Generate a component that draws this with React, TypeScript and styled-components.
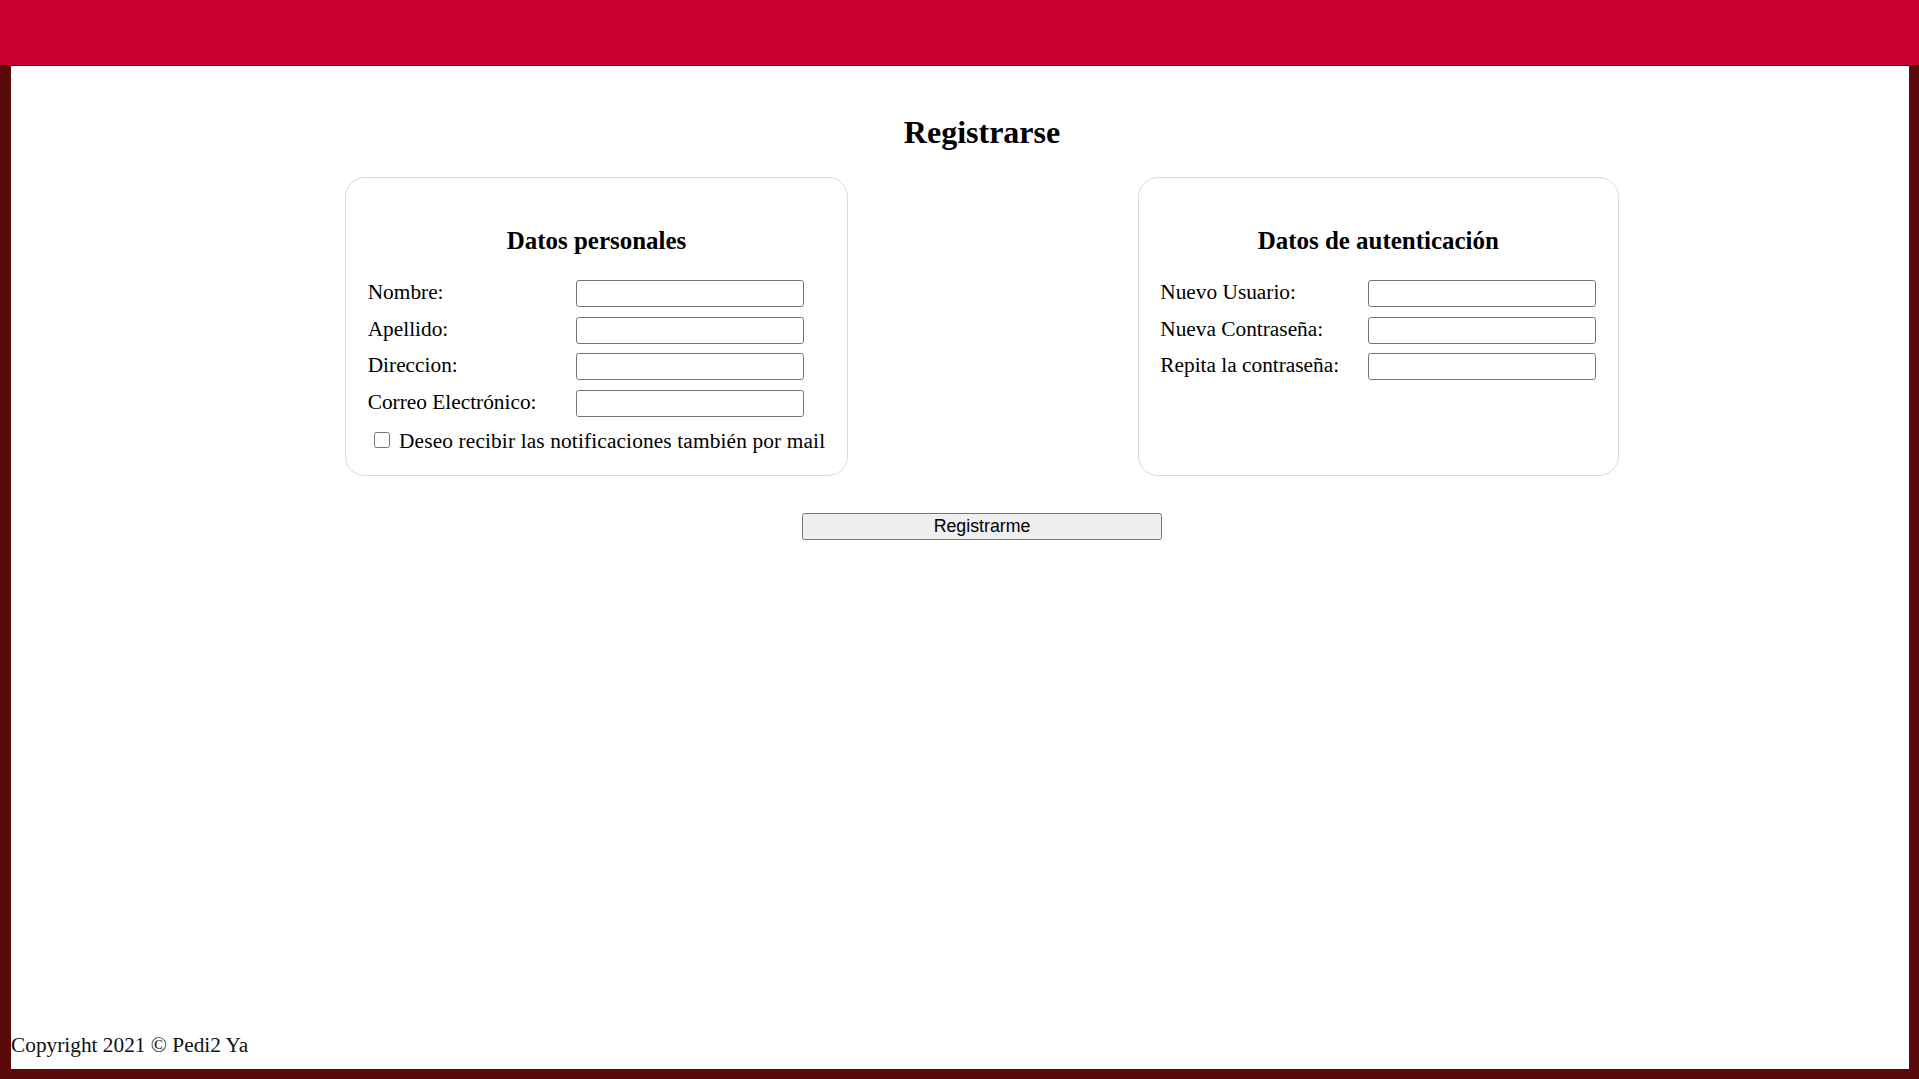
import React from 'react'
import styled, { createGlobalStyle } from 'styled-components'

const GlobalStyle = createGlobalStyle`
  html, body {
    margin: 0;
    padding: 0;
  }

  body {
    background-color: #5b0a0c;
    font-family: "Liberation Serif", "Times New Roman", serif;
    font-size: 21.33px;
    color: #000;
  }
`

const Page = styled.div`
  display: flex;
  flex-direction: column;
  min-height: 100vh;
`

const Header = styled.header`
  height: 65px;
  background-color: #cc0030;
  border-bottom: 1px solid #000;
  flex-shrink: 0;
`

const Frame = styled.div`
  flex: 1;
  display: flex;
  padding: 0 10px 10px 11px;
`

const Sheet = styled.div`
  flex: 1;
  display: flex;
  flex-direction: column;
  background-color: #fff;
  padding-top: 21px;
  padding-bottom: 11px;
`

const Main = styled.main`
  padding-left: 44px;
`

const Title = styled.h2`
  margin: 26.5px 0;
  font-size: 32px;
  font-weight: bold;
  text-align: center;
`

const Cards = styled.div`
  display: flex;
  justify-content: space-evenly;
  align-items: stretch;
`

const Card = styled.section`
  border: 1.33px solid #dadada;
  border-radius: 20px;
  padding: 21.33px;
`

const CardTitle = styled.h3`
  margin: 27.5px 0 25px;
  font-size: 24.96px;
  font-weight: bold;
  text-align: center;
`

const Fields = styled.div`
  display: grid;
  grid-template-columns: 208px 228px;
  row-gap: 9.7px;
  align-items: baseline;
`

const Label = styled.label`
  white-space: nowrap;
`

const TextInput = styled.input`
  box-sizing: border-box;
  width: 228px;
  height: 27px;
  margin: 0;
  padding: 1px 3px;
  border: 1.33px solid #767676;
  border-radius: 2.67px;
  font-family: "Liberation Sans", Arial, sans-serif;
  font-size: 17.78px;
  background: #fff;
`

const CheckRow = styled.div`
  margin-top: 12px;
  white-space: nowrap;
`

const Check = styled.input`
  width: 16px;
  height: 16px;
  margin: 0 4px 0 6px;
  vertical-align: baseline;
`

const CheckText = styled.label`
  letter-spacing: 0.14px;
`

const Actions = styled.div`
  margin-top: 37px;
  text-align: center;
`

const SubmitButton = styled.button`
  box-sizing: border-box;
  width: 360px;
  height: 27px;
  padding: 0;
  border: 1.33px solid #767676;
  border-radius: 2.67px;
  background-color: #efefef;
  font-family: "Liberation Sans", Arial, sans-serif;
  font-size: 17.78px;
  color: #000;
`

const Footer = styled.footer`
  margin-top: auto;
  color: #111;
`

const personal = ['Nombre:', 'Apellido:', 'Direccion:', 'Correo Electrónico:']
const auth = [
  { label: 'Nuevo Usuario:', type: 'text' },
  { label: 'Nueva Contraseña:', type: 'password' },
  { label: 'Repita la contraseña:', type: 'password' },
]

const App: React.FC = () => {
  return (
    <>
      <GlobalStyle />
      <Page>
        <Header />
        <Frame>
          <Sheet>
            <Main>
              <Title>Registrarse</Title>
              <Cards>
                <Card>
                  <CardTitle>Datos personales</CardTitle>
                  <Fields>
                    {personal.map(label => (
                      <React.Fragment key={label}>
                        <Label>{label}</Label>
                        <TextInput type="text" />
                      </React.Fragment>
                    ))}
                  </Fields>
                  <CheckRow>
                    <Check type="checkbox" id="notif" />
                    {' '}
                    <CheckText htmlFor="notif">Deseo recibir las notificaciones también por mail</CheckText>
                  </CheckRow>
                </Card>

                <Card>
                  <CardTitle>Datos de autenticación</CardTitle>
                  <Fields>
                    {auth.map(field => (
                      <React.Fragment key={field.label}>
                        <Label>{field.label}</Label>
                        <TextInput type={field.type} />
                      </React.Fragment>
                    ))}
                  </Fields>
                </Card>
              </Cards>
              <Actions>
                <SubmitButton type="button">Registrarme</SubmitButton>
              </Actions>
            </Main>
            <Footer>Copyright 2021 © Pedi2 Ya</Footer>
          </Sheet>
        </Frame>
      </Page>
    </>
  )
}

export default App
